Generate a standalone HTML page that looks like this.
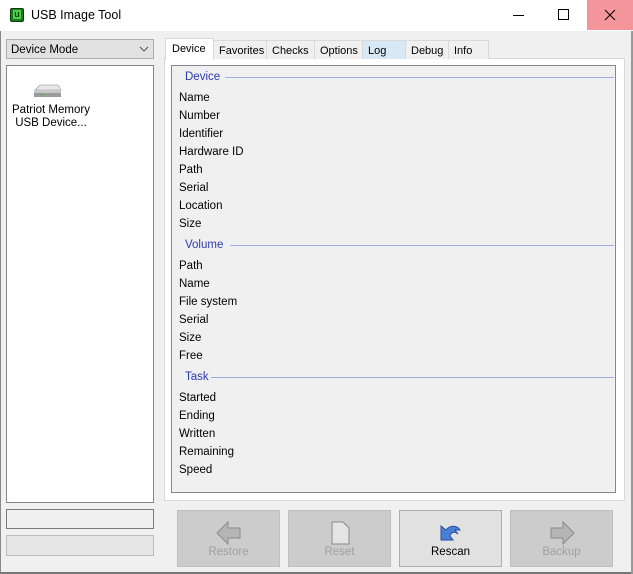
<!DOCTYPE html>
<html><head><style>
*{margin:0;padding:0;box-sizing:border-box}
body{width:633px;height:574px;background:#f0f0f0;font-family:"Liberation Sans",sans-serif;font-size:11.5px;line-height:14px;color:#000;position:relative;overflow:hidden}
.a{position:absolute}
.lbl{position:absolute;left:179px}
.hd{position:absolute;left:185px;color:#2b3bb0}
.ln{position:absolute;height:1px;background:#9aaee6}
.tab{position:absolute;top:40px;height:19px;border:1px solid #d9d9d9;border-bottom:none;background:#f0f0f0;padding:3px 0 0 5px;font-size:11px;white-space:nowrap;overflow:hidden}
.btn{position:absolute;top:510px;width:103px;height:57px;border:1px solid #bfbfbf;background:#cccccc;color:#a0a0a0;text-align:center}
.btn span{position:absolute;left:0;right:0;top:34px}
</style></head><body>
<div class="a" style="left:0;top:0;width:633px;height:31px;background:#fff"></div>
<div class="a" style="left:10px;top:8px;width:14px;height:14px;background:#1e7a1e;border-radius:2px;border:1px solid #0b3d0b"></div>
<div class="a" style="left:13px;top:10px;width:8px;height:9px;background:#4fd04f;color:#0b3d0b;font-size:9px;font-weight:bold;line-height:9px;text-align:center">u</div>
<div class="a" style="left:31px;top:8px;font-size:12.5px">USB Image Tool</div>
<div class="a" style="left:513px;top:15px;width:11px;height:1px;background:#000"></div>
<div class="a" style="left:558px;top:9px;width:11px;height:11px;border:1px solid #000"></div>
<div class="a" style="left:587px;top:0;width:46px;height:30px;background:#f4949b"></div>
<svg class="a" style="left:604px;top:9px" width="12" height="12"><path d="M1 1L11 11M11 1L1 11" stroke="#000" stroke-width="1"/></svg>
<div class="a" style="left:0;top:31px;width:1px;height:543px;background:#888"></div>
<div class="a" style="left:0;top:572px;width:633px;height:2px;background:#777"></div>
<div class="a" style="left:631px;top:31px;width:2px;height:543px;background:#999"></div>

<div class="a" style="left:6px;top:39px;width:148px;height:20px;background:#e1e1e1;border:1px solid #adadad;padding:3px 0 0 4px">Device Mode</div>
<svg class="a" style="left:139px;top:45px" width="10" height="8"><path d="M1 2L5 6L9 2" fill="none" stroke="#555"/></svg>
<div class="a" style="left:6px;top:65px;width:148px;height:438px;background:#fff;border:1px solid #828790"></div>
<svg class="a" style="left:32px;top:84px" width="30" height="16"><path d="M3 6L8 1H26L29 6Z" fill="#e8e8e8" stroke="#bbb"/><rect x="2" y="6" width="27" height="7" fill="#9a9a9a"/><rect x="2" y="6" width="27" height="3" fill="#c8c8c8"/><rect x="9" y="10" width="3" height="1" fill="#2c2"/></svg>
<div class="a" style="left:12px;top:104px;line-height:13px">Patriot Memory<br>&nbsp;USB Device...</div>
<div class="a" style="left:6px;top:509px;width:148px;height:20px;background:#f0f0f0;border:1px solid #7a7a7a"></div>
<div class="a" style="left:6px;top:535px;width:148px;height:21px;background:#e6e6e6;border:1px solid #bcbcbc"></div>

<div class="a" style="left:164px;top:58px;width:461px;height:443px;background:#fff;border:1px solid #d9d9d9"></div>
<div class="tab" style="left:213px;width:54px">Favorites</div>
<div class="tab" style="left:266px;width:49px">Checks</div>
<div class="tab" style="left:314px;width:49px">Options</div>
<div class="tab" style="left:362px;width:44px;background:#d9e8f5">Log</div>
<div class="tab" style="left:405px;width:44px">Debug</div>
<div class="tab" style="left:448px;width:41px">Info</div>
<div class="tab" style="left:165px;top:38px;height:22px;width:49px;background:#fff;padding-top:3px;padding-left:6px">Device</div>
<div class="a" style="left:171px;top:65px;width:445px;height:428px;background:#f0f0f0;border:1px solid #828790"></div>

<div class="hd" style="top:70px">Device</div><div class="ln" style="left:225px;top:77px;width:389px"></div>
<div class="lbl" style="top:91px">Name</div>
<div class="lbl" style="top:109px">Number</div>
<div class="lbl" style="top:127px">Identifier</div>
<div class="lbl" style="top:145px">Hardware ID</div>
<div class="lbl" style="top:163px">Path</div>
<div class="lbl" style="top:181px">Serial</div>
<div class="lbl" style="top:199px">Location</div>
<div class="lbl" style="top:217px">Size</div>
<div class="hd" style="top:238px">Volume</div><div class="ln" style="left:230px;top:245px;width:384px"></div>
<div class="lbl" style="top:259px">Path</div>
<div class="lbl" style="top:277px">Name</div>
<div class="lbl" style="top:295px">File system</div>
<div class="lbl" style="top:313px">Serial</div>
<div class="lbl" style="top:331px">Size</div>
<div class="lbl" style="top:349px">Free</div>
<div class="hd" style="top:370px">Task</div><div class="ln" style="left:211px;top:377px;width:403px"></div>
<div class="lbl" style="top:391px">Started</div>
<div class="lbl" style="top:409px">Ending</div>
<div class="lbl" style="top:427px">Written</div>
<div class="lbl" style="top:445px">Remaining</div>
<div class="lbl" style="top:463px">Speed</div>

<div class="btn" style="left:177px"><svg class="a" style="left:38px;top:10px" width="26" height="24"><path d="M1 12L12 1V7H24V17H12V23Z" fill="#b5b5b5" stroke="#8a8a8a"/></svg><span>Restore</span></div>
<div class="btn" style="left:288px"><svg class="a" style="left:42px;top:10px" width="20" height="24"><path d="M1 1H12L18 7V23H1Z" fill="#e4e4e4" stroke="#8a8a8a"/></svg><span>Reset</span></div>
<div class="btn" style="left:399px;background:#e1e1e1;border-color:#adadad;color:#000"><svg class="a" style="left:40px;top:13px" width="22" height="18"><path d="M1 2L6 6C10 1 17 1 20 6L15 6L18 10C15 7 11 8 10 12L13 16H1Z" fill="#4a7fd6" stroke="#2a4fa0"/></svg><span>Rescan</span></div>
<div class="btn" style="left:510px"><svg class="a" style="left:38px;top:10px" width="26" height="24"><path d="M25 12L14 1V7H2V17H14V23Z" fill="#b5b5b5" stroke="#8a8a8a"/></svg><span>Backup</span></div>
</body></html>
